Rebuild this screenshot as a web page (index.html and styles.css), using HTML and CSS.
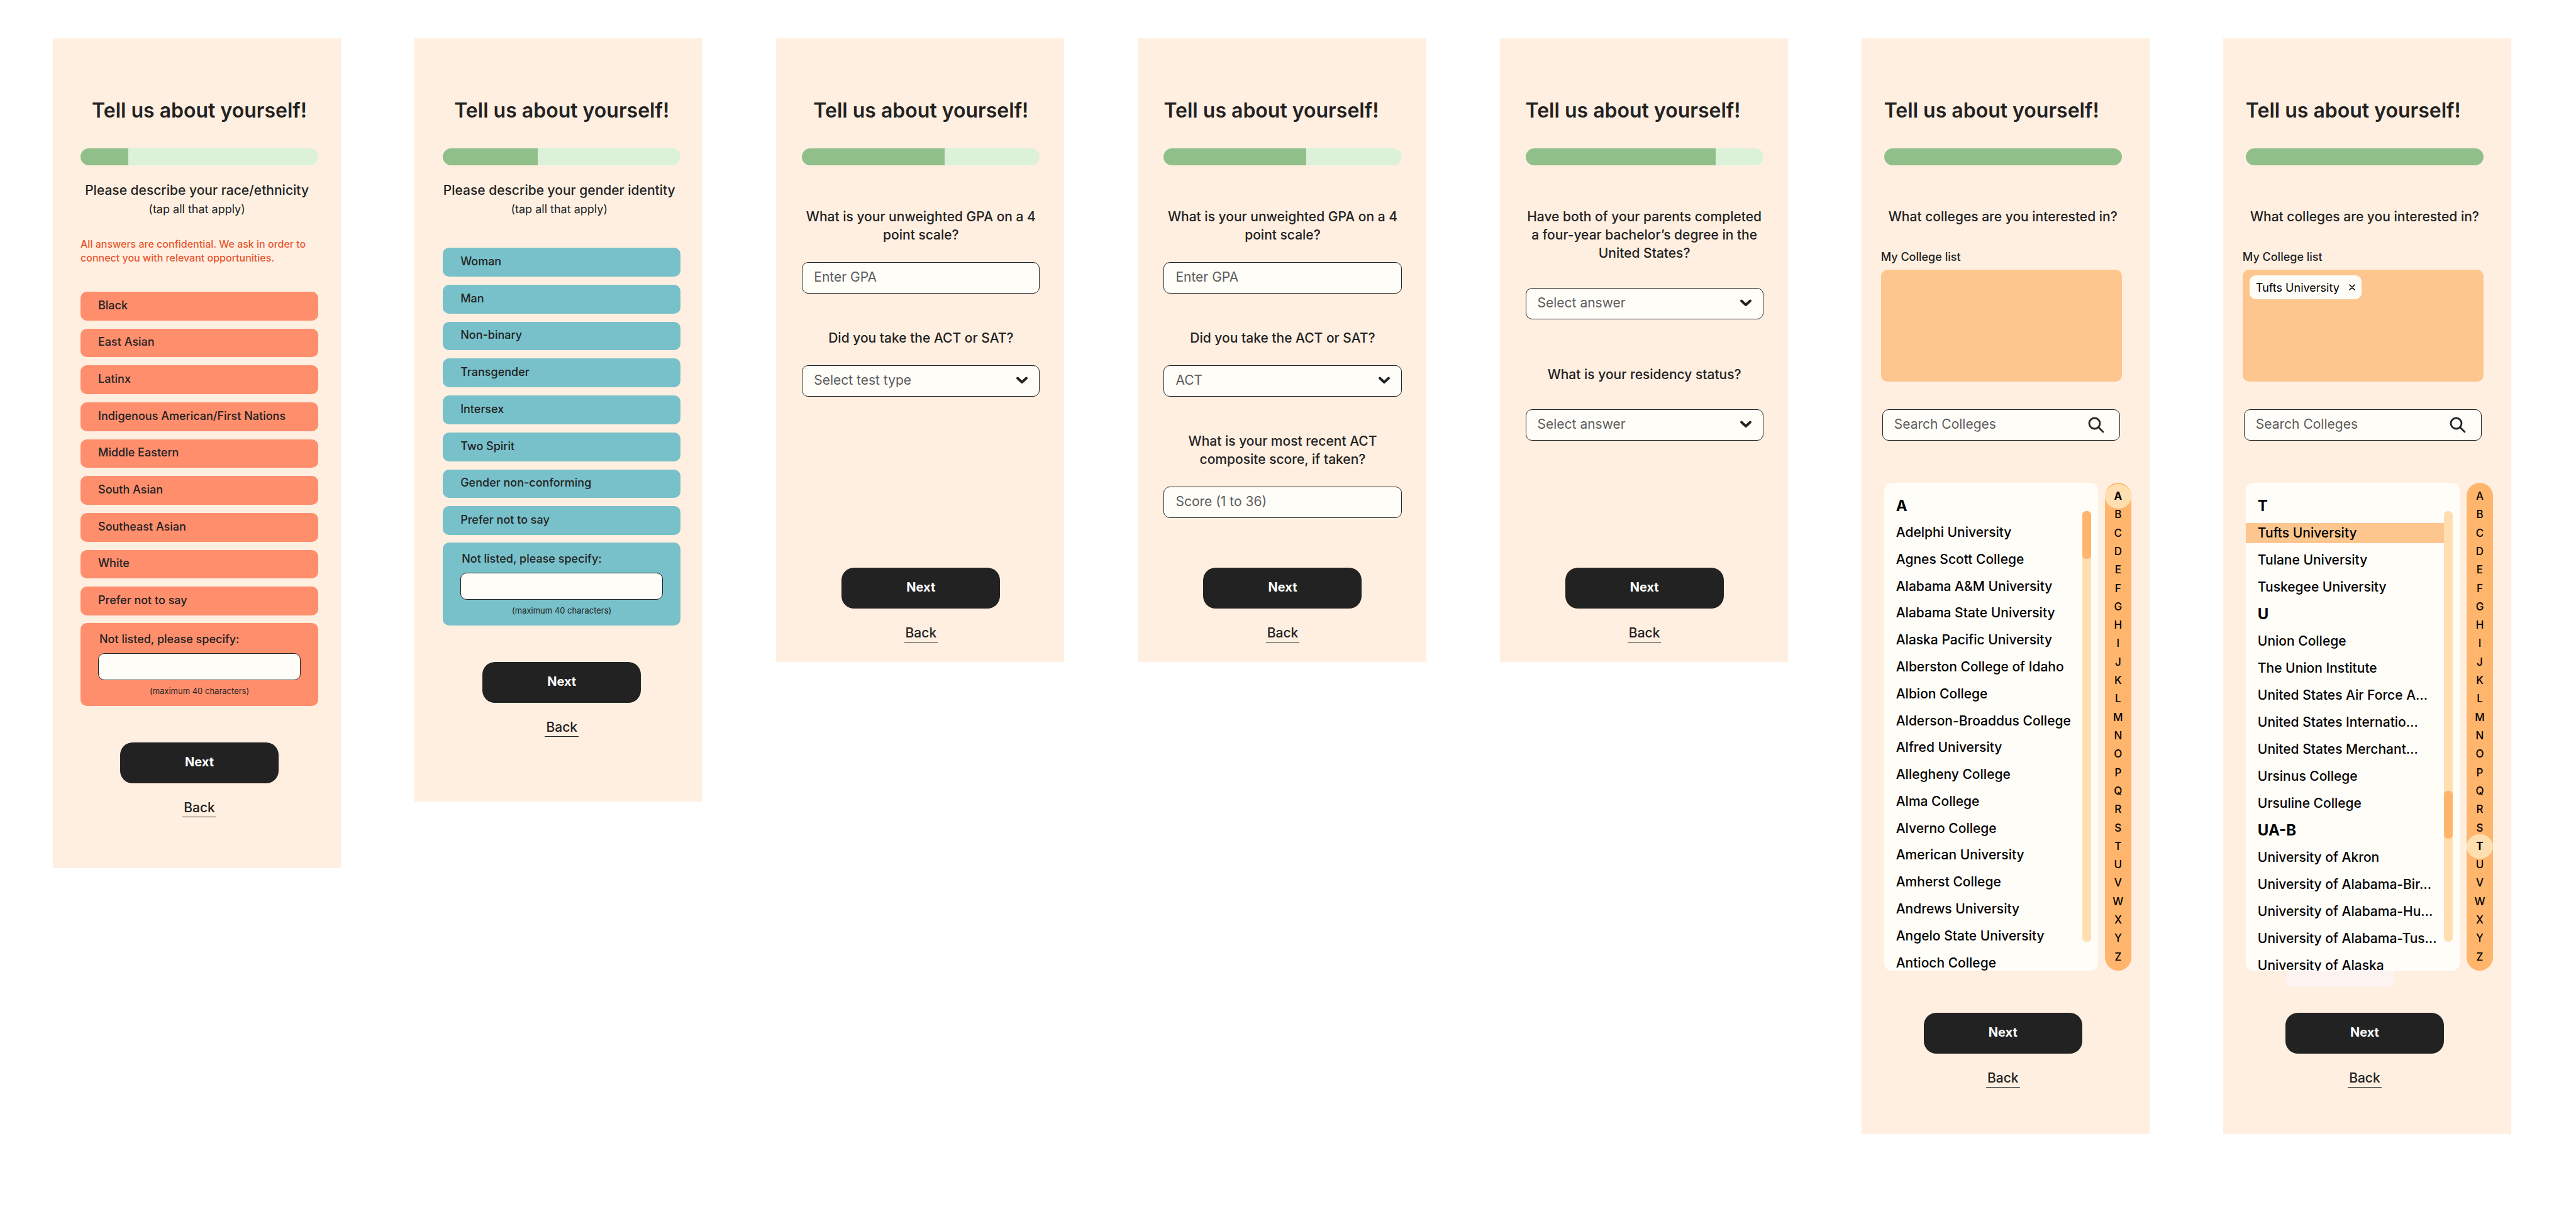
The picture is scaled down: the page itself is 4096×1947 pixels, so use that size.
FILE: index.html
```html
<!DOCTYPE html>
<html lang="en">
<head>
<meta charset="utf-8">
<meta name="viewport" content="width=device-width, initial-scale=1">
<title>Tell us about yourself!</title>
<link rel="stylesheet" href="styles.css">
</head>
<body>
<svg class="sprite" aria-hidden="true">
  <symbol id="chevron" viewBox="0 0 20 14"><path d="M3 3.5 10 10 17 3.5" fill="none" stroke="currentColor" stroke-width="4" stroke-linecap="round" stroke-linejoin="round"/></symbol>
  <symbol id="search" viewBox="0 0 26 26"><circle cx="10.500" cy="10.500" r="8.500" fill="none" stroke="currentColor" stroke-width="2.800"/><path d="M16.500 16.500 24 24" fill="none" stroke="currentColor" stroke-width="2.800" stroke-linecap="round"/></symbol>
  <symbol id="cross" viewBox="0 0 10 10"><path d="M1 1 9 9M9 1 1 9" fill="none" stroke="currentColor" stroke-width="1.600" stroke-linecap="round"/></symbol>
</svg>

<main class="board">

  <form class="screen screen--race">
    <h1 class="title">Tell us about yourself!</h1>
    <div class="progress"><div class="progress__fill" style="width:20%"></div></div>
    <div class="intro">
      <p class="intro__question">Please describe your race/ethnicity</p>
      <p class="intro__hint">(tap all that apply)</p>
    </div>
    <p class="notice">All answers are confidential. We ask in order to connect you with relevant opportunities.</p>
    <div class="options options--nine">
      <label class="option"><input type="checkbox">Black</label>
      <label class="option"><input type="checkbox">East Asian</label>
      <label class="option"><input type="checkbox">Latinx</label>
      <label class="option"><input type="checkbox">Indigenous American/First Nations</label>
      <label class="option"><input type="checkbox">Middle Eastern</label>
      <label class="option"><input type="checkbox">South Asian</label>
      <label class="option"><input type="checkbox">Southeast Asian</label>
      <label class="option"><input type="checkbox">White</label>
      <label class="option"><input type="checkbox">Prefer not to say</label>
    </div>
    <div class="specify">
      <label class="specify__label" for="race-other">Not listed, please specify:</label>
      <input class="specify__input" id="race-other" type="text" maxlength="40">
      <p class="specify__hint">(maximum 40 characters)</p>
    </div>
    <div class="actions">
      <button class="next" type="button">Next</button>
      <a class="back" href="#back">Back</a>
    </div>
  </form>

  <form class="screen screen--gender">
    <h1 class="title">Tell us about yourself!</h1>
    <div class="progress"><div class="progress__fill" style="width:40%"></div></div>
    <div class="intro">
      <p class="intro__question">Please describe your gender identity</p>
      <p class="intro__hint">(tap all that apply)</p>
    </div>
    <div class="options options--eight">
      <label class="option"><input type="checkbox">Woman</label>
      <label class="option"><input type="checkbox">Man</label>
      <label class="option"><input type="checkbox">Non-binary</label>
      <label class="option"><input type="checkbox">Transgender</label>
      <label class="option"><input type="checkbox">Intersex</label>
      <label class="option"><input type="checkbox">Two Spirit</label>
      <label class="option"><input type="checkbox">Gender non-conforming</label>
      <label class="option"><input type="checkbox">Prefer not to say</label>
    </div>
    <div class="specify">
      <label class="specify__label" for="gender-other">Not listed, please specify:</label>
      <input class="specify__input" id="gender-other" type="text" maxlength="40">
      <p class="specify__hint">(maximum 40 characters)</p>
    </div>
    <div class="actions">
      <button class="next" type="button">Next</button>
      <a class="back" href="#back">Back</a>
    </div>
  </form>

  <form class="screen screen--short">
    <h1 class="title">Tell us about yourself!</h1>
    <div class="progress"><div class="progress__fill" style="width:60%"></div></div>
    <div class="fields">
      <div class="field">
        <label class="question" for="gpa-1">What is your unweighted GPA on a 4<br>point scale?</label>
        <input class="control" id="gpa-1" type="text" placeholder="Enter GPA">
      </div>
      <div class="field">
        <label class="question" for="test-1">Did you take the ACT or SAT?</label>
        <div class="picker">
          <select class="control" id="test-1"><option>Select test type</option><option>ACT</option><option>SAT</option></select>
          <svg class="picker__icon" aria-hidden="true"><use href="#chevron"/></svg>
        </div>
      </div>
    </div>
    <div class="actions">
      <button class="next" type="button">Next</button>
      <a class="back" href="#back">Back</a>
    </div>
  </form>

  <form class="screen screen--short">
    <h1 class="title title--start">Tell us about yourself!</h1>
    <div class="progress"><div class="progress__fill" style="width:60%"></div></div>
    <div class="fields">
      <div class="field">
        <label class="question" for="gpa-2">What is your unweighted GPA on a 4<br>point scale?</label>
        <input class="control" id="gpa-2" type="text" placeholder="Enter GPA">
      </div>
      <div class="field">
        <label class="question" for="test-2">Did you take the ACT or SAT?</label>
        <div class="picker">
          <select class="control" id="test-2"><option>ACT</option><option>SAT</option></select>
          <svg class="picker__icon" aria-hidden="true"><use href="#chevron"/></svg>
        </div>
      </div>
      <div class="field">
        <label class="question" for="score">What is your most recent ACT<br>composite score, if taken?</label>
        <input class="control" id="score" type="text" placeholder="Score (1 to 36)">
      </div>
    </div>
    <div class="actions">
      <button class="next" type="button">Next</button>
      <a class="back" href="#back">Back</a>
    </div>
  </form>

  <form class="screen screen--short">
    <h1 class="title title--start">Tell us about yourself!</h1>
    <div class="progress"><div class="progress__fill" style="width:80%"></div></div>
    <div class="fields fields--roomy">
      <div class="field">
        <label class="question" for="parents">Have both of your parents completed<br>a four-year bachelor’s degree in the<br>United States?</label>
        <div class="picker">
          <select class="control" id="parents"><option>Select answer</option><option>Yes</option><option>No</option></select>
          <svg class="picker__icon" aria-hidden="true"><use href="#chevron"/></svg>
        </div>
      </div>
      <div class="field">
        <label class="question" for="residency">What is your residency status?</label>
        <div class="picker">
          <select class="control" id="residency"><option>Select answer</option></select>
          <svg class="picker__icon" aria-hidden="true"><use href="#chevron"/></svg>
        </div>
      </div>
    </div>
    <div class="actions">
      <button class="next" type="button">Next</button>
      <a class="back" href="#back">Back</a>
    </div>
  </form>

  <form class="screen screen--colleges">
    <h1 class="title title--start">Tell us about yourself!</h1>
    <div class="progress"><div class="progress__fill" style="width:100%"></div></div>
    <h2 class="question question--solo">What colleges are you interested in?</h2>
    <div class="picked">
      <h3 class="picked__label">My College list</h3>
      <div class="picked__box"></div>
    </div>
    <div class="search">
      <input class="control" type="search" placeholder="Search Colleges" aria-label="Search Colleges">
      <svg class="search__icon" aria-hidden="true"><use href="#search"/></svg>
    </div>
    <div class="browser">
      <div class="catalog">
        <ul class="catalog__list catalog__list--tight">
          <li class="catalog__group">A</li>
          <li><a href="#c">Adelphi University</a></li>
          <li><a href="#c">Agnes Scott College</a></li>
          <li><a href="#c">Alabama A&amp;M University</a></li>
          <li><a href="#c">Alabama State University</a></li>
          <li><a href="#c">Alaska Pacific University</a></li>
          <li><a href="#c">Alberston College of Idaho</a></li>
          <li><a href="#c">Albion College</a></li>
          <li><a href="#c">Alderson-Broaddus College</a></li>
          <li><a href="#c">Alfred University</a></li>
          <li><a href="#c">Allegheny College</a></li>
          <li><a href="#c">Alma College</a></li>
          <li><a href="#c">Alverno College</a></li>
          <li><a href="#c">American University</a></li>
          <li><a href="#c">Amherst College</a></li>
          <li><a href="#c">Andrews University</a></li>
          <li><a href="#c">Angelo State University</a></li>
          <li><a href="#c">Antioch College</a></li>
        </ul>
        <div class="track"><div class="track__thumb"></div></div>
      </div>
      <nav class="letters" aria-label="Jump to letter">
        <a class="is-current" href="#A">A</a><a href="#B">B</a><a href="#C">C</a><a href="#D">D</a><a href="#E">E</a><a href="#F">F</a><a href="#G">G</a><a href="#H">H</a><a href="#I">I</a><a href="#J">J</a><a href="#K">K</a><a href="#L">L</a><a href="#M">M</a><a href="#N">N</a><a href="#O">O</a><a href="#P">P</a><a href="#Q">Q</a><a href="#R">R</a><a href="#S">S</a><a href="#T">T</a><a href="#U">U</a><a href="#V">V</a><a href="#W">W</a><a href="#X">X</a><a href="#Y">Y</a><a href="#Z">Z</a>
      </nav>
    </div>
    <div class="actions">
      <button class="next" type="button">Next</button>
      <a class="back" href="#back">Back</a>
    </div>
  </form>

  <form class="screen screen--colleges">
    <h1 class="title title--start">Tell us about yourself!</h1>
    <div class="progress"><div class="progress__fill" style="width:100%"></div></div>
    <h2 class="question question--solo">What colleges are you interested in?</h2>
    <div class="picked">
      <h3 class="picked__label">My College list</h3>
      <div class="picked__box">
        <span class="chip">Tufts University
          <button class="chip__remove" type="button" aria-label="Remove Tufts University"><svg aria-hidden="true"><use href="#cross"/></svg></button>
        </span>
      </div>
    </div>
    <div class="search">
      <input class="control" type="search" placeholder="Search Colleges" aria-label="Search Colleges">
      <svg class="search__icon" aria-hidden="true"><use href="#search"/></svg>
    </div>
    <div class="browser browser--shaded">
      <div class="catalog">
        <ul class="catalog__list">
          <li class="catalog__group">T</li>
          <li><a class="is-picked" href="#c">Tufts University</a></li>
          <li><a href="#c">Tulane University</a></li>
          <li><a href="#c">Tuskegee University</a></li>
          <li class="catalog__group">U</li>
          <li><a href="#c">Union College</a></li>
          <li><a href="#c">The Union Institute</a></li>
          <li><a href="#c">United States Air Force A…</a></li>
          <li><a href="#c">United States Internatio…</a></li>
          <li><a href="#c">United States Merchant…</a></li>
          <li><a href="#c">Ursinus College</a></li>
          <li><a href="#c">Ursuline College</a></li>
          <li class="catalog__group">UA-B</li>
          <li><a href="#c">University of Akron</a></li>
          <li><a href="#c">University of Alabama-Bir…</a></li>
          <li><a href="#c">University of Alabama-Hu…</a></li>
          <li><a href="#c">University of Alabama-Tus…</a></li>
          <li><a href="#c">University of Alaska</a></li>
        </ul>
        <div class="track"><div class="track__thumb track__thumb--low"></div></div>
      </div>
      <nav class="letters" aria-label="Jump to letter">
        <a href="#A">A</a><a href="#B">B</a><a href="#C">C</a><a href="#D">D</a><a href="#E">E</a><a href="#F">F</a><a href="#G">G</a><a href="#H">H</a><a href="#I">I</a><a href="#J">J</a><a href="#K">K</a><a href="#L">L</a><a href="#M">M</a><a href="#N">N</a><a href="#O">O</a><a href="#P">P</a><a href="#Q">Q</a><a href="#R">R</a><a href="#S">S</a><a class="is-current" href="#T">T</a><a href="#U">U</a><a href="#V">V</a><a href="#W">W</a><a href="#X">X</a><a href="#Y">Y</a><a href="#Z">Z</a>
      </nav>
    </div>
    <div class="actions">
      <button class="next" type="button">Next</button>
      <a class="back" href="#back">Back</a>
    </div>
  </form>

</main>
</body>
</html>
```
FILE: styles.css
```css
:root {
  --ink: #222222;
  --muted: #5c5c5c;
  --sand: #ffefe1;
  --paper: #fffdf8;
  --coral: #ff8e6d;
  --teal: #78c1ca;
  --green: #91bf8a;
  --mint: #dbf2d8;
  --apricot: #fdc68e;
  --orange: #ffb56b;
  --cream: #ffdfaf;
}

* { box-sizing: border-box; }

body {
  margin: 0;
  background: #ffffff;
  color: var(--ink);
  font-family: Inter, "Liberation Sans", sans-serif;
  font-size: 21px;
  font-weight: 500;
  line-height: 29px;
}

h1, h2, h3, p, ul { margin: 0; padding: 0; }

a { color: inherit; text-decoration: none; }

button, input, select { font: inherit; color: inherit; }

.sprite { position: absolute; width: 0; height: 0; }

.board {
  display: grid;
  grid-template-columns: repeat(7, 1fr);
  gap: 117px;
  align-items: start;
  padding: 61px 103px 61px 84px;
}

/* Screens */

.screen {
  display: flex;
  flex-direction: column;
  padding: 95px 39px 31px 41px;
  background: var(--sand);
}

.screen--race { --option: var(--coral); padding: 95px 36px 81px 44px; }
.screen--gender { --option: var(--teal); padding: 95px 35px 103px 45px; }
.screen--short { min-height: 992px; }
.screen--colleges { padding: 95px 44px 74px 36px; }

.title {
  font-size: 32px;
  font-weight: 600;
  line-height: 40px;
  text-align: center;
  white-space: nowrap;
}

.title--start { text-align: left; }

.progress {
  height: 27px;
  margin-top: 40px;
  border-radius: 14px;
  background: var(--mint);
  overflow: hidden;
}

.progress__fill { height: 100%; background: var(--green); }

/* Multiple choice */

.intro {
  margin: 25px -36px 0 -44px;
  line-height: 30px;
  text-align: center;
}

.intro__hint { font-size: 18px; font-weight: 400; }

.notice {
  margin-top: 29px;
  color: #e8552d;
  font-size: 16px;
  line-height: 22px;
}

.options {
  display: grid;
  grid-auto-rows: 1fr;
  gap: 13px;
}

.options--nine { min-height: 515px; margin-top: 43px; }
.options--eight { min-height: 457px; margin-top: 46px; }

.option {
  display: flex;
  align-items: center;
  padding: 0 28px 2px;
  border-radius: 10px;
  background: var(--option);
  font-size: 18px;
  line-height: 24px;
}

.option input { position: absolute; opacity: 0; pointer-events: none; }

.specify {
  display: flex;
  flex-direction: column;
  margin-top: 12px;
  padding: 14px 28px;
  border-radius: 10px;
  background: var(--option);
}

.specify__label { padding-left: 2px; font-size: 18px; line-height: 24px; }

.specify__input {
  width: 100%;
  height: 43px;
  margin-top: 10px;
  padding: 0 12px;
  border: 1px solid var(--ink);
  border-radius: 10px;
  background: var(--paper);
}

.specify__hint {
  margin-top: 8px;
  font-size: 13px;
  font-weight: 400;
  line-height: 19px;
  text-align: center;
}

/* Form fields */

.fields {
  display: flex;
  flex-direction: column;
  gap: 56px;
  margin-top: 67px;
}

.field { display: flex; flex-direction: column; gap: 29px; }

.fields--roomy { gap: 73px; }
.fields--roomy .field { gap: 41px; }

.question {
  margin: 0 -10px;
  font-size: 21px;
  font-weight: 500;
  line-height: 29px;
  text-align: center;
  white-space: nowrap;
}

.question--solo { margin-top: 67px; }

.control {
  display: block;
  width: 100%;
  height: 50px;
  padding: 0 18px 4px;
  border: 1px solid var(--ink);
  border-radius: 10px;
  background: var(--paper);
  color: var(--muted);
  font-weight: 400;
  appearance: none;
}

.control::placeholder { color: var(--muted); opacity: 1; }

.picker, .search { position: relative; }

.picker__icon {
  position: absolute;
  top: 17px;
  right: 18px;
  width: 20px;
  height: 14px;
  pointer-events: none;
}

/* College picker */

.picked { margin: 38px 0 0 -5px; }

.picked__label { font-size: 18px; font-weight: 500; line-height: 24px; }

.picked__box {
  min-height: 178px;
  margin-top: 8px;
  padding: 9px 11px;
  border-radius: 10px;
  background: var(--apricot);
}

.chip {
  display: inline-flex;
  align-items: center;
  gap: 15px;
  height: 38px;
  padding: 0 10px;
  border-radius: 10px;
  background: var(--paper);
  color: #000000;
  font-size: 18px;
  font-weight: 400;
}

.chip__remove {
  display: flex;
  padding: 0;
  border: 0;
  background: none;
}

.chip__remove svg { width: 10px; height: 10px; }

.search { margin: 44px 3px 0 -3px; }

.search__icon {
  position: absolute;
  top: 12px;
  right: 25px;
  width: 26px;
  height: 26px;
}

.browser {
  position: relative;
  z-index: 0;
  display: flex;
  gap: 11px;
  height: 776px;
  margin: 67px -15px 0 0;
}

.browser--shaded::before {
  content: "";
  position: absolute;
  z-index: -1;
  left: 64px;
  bottom: -25px;
  width: 172px;
  height: 50px;
  background: #fdf3f1;
}

.catalog {
  display: flex;
  flex: 1;
  border-radius: 12px;
  background: var(--paper);
  color: #000000;
  overflow: hidden;
}

.catalog__list {
  display: grid;
  flex: 1;
  grid-auto-rows: 43px;
  padding-top: 15px;
  list-style: none;
}

.catalog__list--tight {
  grid-auto-rows: 1fr;
  height: 785px;
}

.catalog__list li { display: flex; align-items: center; }

.catalog__list a {
  flex: 1;
  padding-left: 19px;
  line-height: 32px;
  white-space: nowrap;
}

.catalog__list .catalog__group {
  padding-left: 19px;
  font-size: 24px;
  font-weight: 700;
}

.is-picked { background: var(--apricot); }

.track {
  width: 14px;
  margin: 45px 11px 46px 0;
  border-radius: 6px;
  background: var(--cream);
}

.track__thumb {
  height: 76px;
  border-radius: 6px;
  background: var(--orange);
}

.track__thumb--low { margin-top: 445px; }

.letters {
  position: relative;
  z-index: 0;
  display: grid;
  grid-auto-rows: 1fr;
  width: 42px;
  padding: 7px 0;
  border-radius: 21px;
  background: var(--orange);
  color: #000000;
  font-size: 17px;
  text-align: center;
}

.letters a { position: relative; }

.letters .is-current { font-weight: 700; }

.letters .is-current::before {
  content: "";
  position: absolute;
  z-index: -1;
  inset: -5px 0;
  border-radius: 50%;
  background: var(--cream);
}

/* Footer actions */

.actions {
  display: flex;
  flex-direction: column;
  align-items: center;
  gap: 25px;
  margin-top: auto;
}

.screen--race .actions,
.screen--gender .actions { margin-top: 58px; }
.screen--colleges .actions { margin-top: 67px; }

.next {
  width: 252px;
  height: 65px;
  padding: 0 0 3px;
  border: 0;
  border-radius: 20px;
  background: var(--ink);
  color: #ffffff;
  font-size: 20px;
  font-weight: 700;
}

.back {
  padding: 0 2px;
  border-bottom: 1px solid var(--ink);
  line-height: 28px;
}
```
